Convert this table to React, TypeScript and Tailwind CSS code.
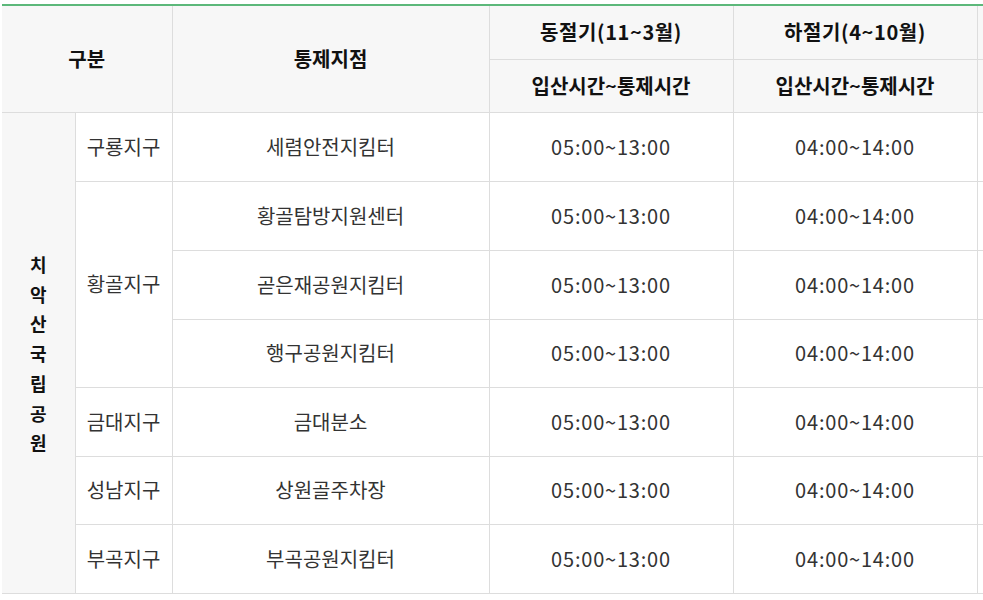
import React from "react";

const rows: { district?: string; span?: number; point: string; h: string }[] = [
  { district: "구룡지구", span: 1, point: "세렴안전지킴터", h: "h-[69px]" },
  { district: "황골지구", span: 3, point: "황골탐방지원센터", h: "h-[69px]" },
  { point: "곧은재공원지킴터", h: "h-[69px]" },
  { point: "행구공원지킴터", h: "h-[68px]" },
  { district: "금대지구", span: 1, point: "금대분소", h: "h-[69px]" },
  { district: "성남지구", span: 1, point: "상원골주차장", h: "h-[68px]" },
  { district: "부곡지구", span: 1, point: "부곡공원지킴터", h: "h-[69px]" },
];

const th = "bg-[#f7f7f7] border border-[#dddddd] font-bold text-[#111] text-[20px]";

export default function App() {
  const park = "치악산국립공원".split("");
  return (
    <div
      className="w-[983px] h-[600px] overflow-hidden bg-white pt-[4px] pl-[2px]"
      style={{ fontFamily: '"Noto Sans CJK KR", "Noto Sans", sans-serif' }}
    >
      <table className="border-collapse table-fixed w-[1240px] border-t-2 border-t-[#5cb87a] text-[20px] text-[#333]">
        <colgroup>
          <col className="w-[73px]" />
          <col className="w-[97px]" />
          <col className="w-[317px]" />
          <col className="w-[244px]" />
          <col className="w-[244px]" />
          <col className="w-[265px]" />
        </colgroup>
        <thead>
          <tr className="h-[54px]">
            <th colSpan={2} rowSpan={2} className={`${th} border-t-0 border-l-0`}>
              구분
            </th>
            <th rowSpan={2} className={`${th} border-t-0`}>
              통제지점
            </th>
            <th className={`${th} border-t-0 tracking-[0.6px]`}>동절기(11~3월)</th>
            <th className={`${th} border-t-0 tracking-[0.6px]`}>하절기(4~10월)</th>
            <th className={`${th} border-t-0`}></th>
          </tr>
          <tr className="h-[53px]">
            <th className={th}>입산시간~통제시간</th>
            <th className={th}>입산시간~통제시간</th>
            <th className={th}></th>
          </tr>
        </thead>
        <tbody>
          {rows.map((r, i) => (
            <tr key={i} className={r.h}>
              {i === 0 && (
                <th rowSpan={7} className="bg-[#f7f7f7] border border-[#dddddd] border-l-0 font-bold text-[#111] text-[18px] align-middle">
                  <div className="flex flex-col items-center leading-[29.7px] pt-[3px]">
                    {park.map((c, j) => (
                      <span key={j}>{c}</span>
                    ))}
                  </div>
                </th>
              )}
              {r.district && (
                <td rowSpan={r.span} className="border border-[#dddddd] text-center">
                  {r.district}
                </td>
              )}
              <td className="border border-[#dddddd] text-center">{r.point}</td>
              <td className="border border-[#dddddd] text-center tracking-[0.8px]">05:00~13:00</td>
              <td className="border border-[#dddddd] text-center tracking-[0.8px]">04:00~14:00</td>
              <td className="border border-[#dddddd] text-center"></td>
            </tr>
          ))}
        </tbody>
      </table>
    </div>
  );
}
